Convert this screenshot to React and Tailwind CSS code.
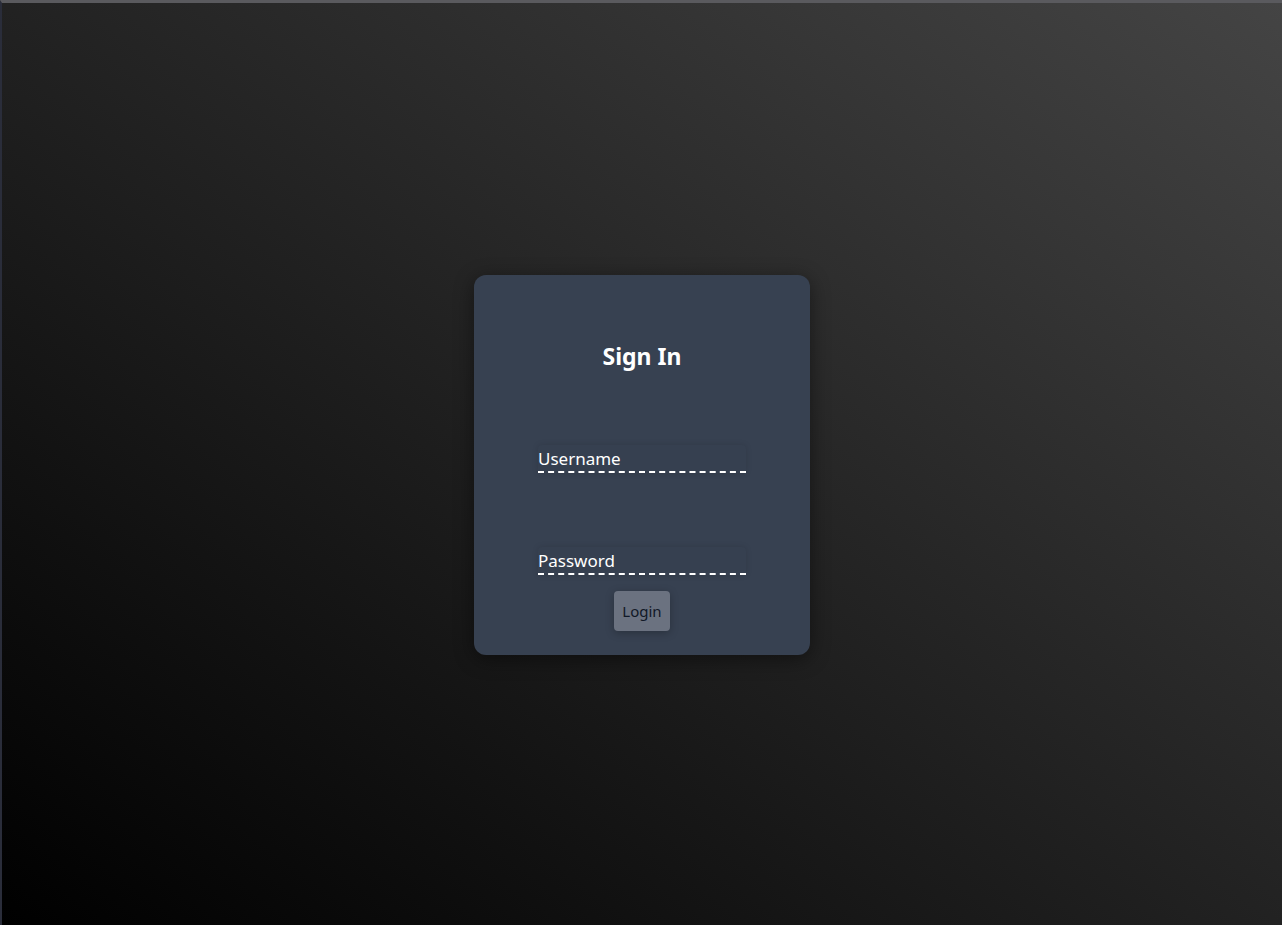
import React, { useState } from 'react'

function App() {
  const [username, setUsername] = useState("");
  const [password, setPassword] = useState("");

  return (
    <div
      className="h-[925px] w-full overflow-hidden border-t-[3px] border-l-2 border-t-[#5a5a5e] border-l-[#2a2d3a] bg-linear-to-tr/srgb from-black to-[#444444] flex items-center justify-center"
      style={{ fontFamily: '"Noto Sans", "Open Sans", sans-serif' }}
    >
      {/* Card */}
      <div className="w-[336px] h-[380px] mt-[2px] bg-[#374151] rounded-xl shadow-[0_4px_20px_rgba(0,0,0,0.45)] flex flex-col items-center pt-[66px]">
        <h1 className="text-[23px] leading-[30px] font-bold text-white">Sign In</h1>

        <input
          type="text"
          placeholder="Username"
          value={username}
          onChange={(e) => setUsername(e.target.value)}
          className="mt-[74px] w-[208px] h-[28px] bg-[#364050] rounded-t-sm border-b-2 border-dashed border-white text-white placeholder-white text-[17px] leading-[22px] focus:outline-none shadow-[0_0_6px_rgba(0,0,0,0.12)]"
        />

        <input
          type="password"
          placeholder="Password"
          value={password}
          onChange={(e) => setPassword(e.target.value)}
          className="mt-[74px] w-[208px] h-[28px] bg-[#364050] rounded-t-sm border-b-2 border-dashed border-white text-white placeholder-white text-[17px] leading-[22px] focus:outline-none shadow-[0_0_6px_rgba(0,0,0,0.12)]"
        />

        <button
          type="button"
          className="mt-[16px] w-[56px] h-[40px] bg-[#6b7280] rounded-sm text-[15px] text-[#111827] shadow-[0_2px_8px_rgba(0,0,0,0.25)]"
        >
          Login
        </button>
      </div>
    </div>
  )
}

export default App
